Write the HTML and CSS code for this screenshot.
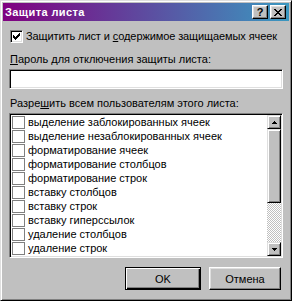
FILE: index.html
```html
<!DOCTYPE html>
<html lang="ru">
<head>
<meta charset="utf-8">
<title>Защита листа</title>
<link rel="stylesheet" href="styles.css">
</head>
<body>
<div class="dialog">
  <div class="titlebar">
    <span class="title">Защита листа</span>
    <div class="tbtns">
      <span class="tbtn help">?</span>
      <span class="tbtn close">
        <svg width="8" height="7" viewBox="0 0 8 7" shape-rendering="crispEdges"><path d="M0 0h2v1h-2zM6 0h2v1h-2zM1 1h2v1h-2zM5 1h2v1h-2zM2 2h4v1h-4zM3 3h2v1h-2zM2 4h4v1h-4zM1 5h2v1h-2zM5 5h2v1h-2zM0 6h2v1h-2zM6 6h2v1h-2z" fill="#000"/></svg>
      </span>
    </div>
  </div>
  <div class="content">
    <div class="chk-row">
      <span class="chk">
        <svg width="7" height="7" viewBox="0 0 7 7" shape-rendering="crispEdges"><path d="M6 0h1v1h-1zM5 1h2v1h-2zM0 2h1v1h-1zM4 2h3v1h-3zM0 3h2v1h-2zM3 3h3v1h-3zM0 4h5v1h-5zM1 5h3v1h-3zM2 6h1v1h-1z" fill="#000"/></svg>
      </span>
      <span class="chk-text">Защитить лист и <u>с</u>одержимое защищаемых ячеек</span>
    </div>
    <div class="label"><u>П</u>ароль для отключения защиты листа:</div>
    <div class="field"></div>
    <div class="label second">Разре<u>ш</u>ить всем пользователям этого листа:</div>
    <div class="list">
      <div class="items">
        <div class="item"><span class="box"></span>выделение заблокированных ячеек</div>
        <div class="item"><span class="box"></span>выделение незаблокированных ячеек</div>
        <div class="item"><span class="box"></span>форматирование ячеек</div>
        <div class="item"><span class="box"></span>форматирование столбцов</div>
        <div class="item"><span class="box"></span>форматирование строк</div>
        <div class="item"><span class="box"></span>вставку столбцов</div>
        <div class="item"><span class="box"></span>вставку строк</div>
        <div class="item"><span class="box"></span>вставку гиперссылок</div>
        <div class="item"><span class="box"></span>удаление столбцов</div>
        <div class="item"><span class="box"></span>удаление строк</div>
      </div>
      <div class="scrollbar">
        <div class="sbtn"><svg width="5" height="3" viewBox="0 0 5 3" shape-rendering="crispEdges"><path d="M2 0h1v1h-1zM1 1h3v1h-3zM0 2h5v1h-5z" fill="#000"/></svg></div>
        <div class="thumb"></div>
        <div class="track"></div>
        <div class="sbtn"><svg width="5" height="3" viewBox="0 0 5 3" shape-rendering="crispEdges"><path d="M0 0h5v1h-5zM1 1h3v1h-3zM2 2h1v1h-1z" fill="#000"/></svg></div>
      </div>
    </div>
    <div class="buttons">
      <div class="btn default">OK</div>
      <div class="btn cancel">Отмена</div>
    </div>
  </div>
</div>
</body>
</html>
```
FILE: styles.css
```css
html, body {
  margin: 0;
  padding: 0;
  background: #c0c0c0;
}
.dialog {
  width: 292px;
  height: 301px;
  box-sizing: border-box;
  border: 1px solid;
  border-color: #dfdfdf #000 #000 #dfdfdf;
  box-shadow: inset 1px 1px #fff, inset -1px -1px #808080;
  padding: 2px;
  background: #c0c0c0;
  font-family: "Liberation Sans", Arial, sans-serif;
  font-size: 11px;
  color: #000;
}
.titlebar {
  height: 18px;
  display: flex;
  align-items: center;
  justify-content: space-between;
  background: linear-gradient(to right, #800080, #3a98c0);
  color: #fff;
  font-weight: bold;
  padding: 0 3px 0 2px;
}
.title {
  line-height: 18px;
  letter-spacing: 0.4px;
}
.tbtns {
  display: flex;
  gap: 2px;
}
.tbtn {
  width: 16px;
  height: 14px;
  box-sizing: border-box;
  border: 1px solid;
  border-color: #fff #000 #000 #fff;
  box-shadow: inset -1px -1px #808080, inset 1px 1px #dfdfdf;
  background: #c0c0c0;
  color: #000;
  display: flex;
  align-items: center;
  justify-content: center;
  font-size: 11px;
  font-weight: bold;
  line-height: 12px;
}
.content {
  padding: 9px 8px 0 6px;
}
.chk-row {
  display: flex;
  align-items: center;
  height: 13px;
  line-height: 13px;
  white-space: nowrap;
}
.chk {
  flex: none;
  width: 13px;
  height: 13px;
  box-sizing: border-box;
  margin-left: 1px;
  border: 1px solid;
  border-color: #808080 #fff #fff #808080;
  box-shadow: inset 1px 1px #000, inset -1px -1px #dfdfdf;
  background: #fff;
  display: flex;
  align-items: center;
  justify-content: center;
}
.chk-text {
  margin-left: 3px;
  white-space: nowrap;
  letter-spacing: -0.1px;
}
.label {
  line-height: 13px;
  margin-top: 10px;
  padding-left: 1px;
  white-space: nowrap;
}
.label.second {
  margin-top: 8px;
}
u {
  text-decoration: underline;
}
.field {
  margin-top: 3px;
  width: 274px;
  height: 20px;
  box-sizing: border-box;
  border: 1px solid;
  border-color: #808080 #fff #fff #808080;
  box-shadow: inset 1px 1px #000, inset -1px -1px #dfdfdf;
  background: #fff;
}
.list {
  margin-top: 3px;
  width: 274px;
  height: 145px;
  box-sizing: border-box;
  border: 1px solid;
  border-color: #808080 #fff #fff #808080;
  box-shadow: inset 1px 1px #000, inset -1px -1px #dfdfdf;
  background: #fff;
  padding: 1px;
  display: flex;
}
.items {
  flex: 1;
  display: flex;
  flex-direction: column;
}
.item {
  height: 14px;
  display: flex;
  align-items: center;
  line-height: 13px;
  white-space: nowrap;
}
.box {
  flex: none;
  width: 13px;
  height: 13px;
  box-sizing: border-box;
  margin-left: 1px;
  margin-right: 3px;
  border: 1px solid #808080;
  background: #fff;
}
.scrollbar {
  width: 14px;
  display: flex;
  flex-direction: column;
}
.sbtn, .thumb {
  box-sizing: border-box;
  border: 1px solid;
  border-color: #dfdfdf #000 #000 #dfdfdf;
  box-shadow: inset 1px 1px #fff, inset -1px -1px #808080;
  background: #c0c0c0;
}
.sbtn {
  height: 14px;
  display: flex;
  align-items: center;
  justify-content: center;
}
.thumb {
  height: 74px;
}
.track {
  flex: 1;
  background-color: #c0c0c0;
  background-image: conic-gradient(#fff 25%, #c0c0c0 0 50%, #fff 0 75%, #c0c0c0 0);
  background-size: 2px 2px;
}
.buttons {
  margin-top: 9px;
  display: flex;
  justify-content: flex-end;
  gap: 8px;
}
.btn {
  height: 23px;
  box-sizing: border-box;
  display: flex;
  align-items: center;
  justify-content: center;
  background: #c0c0c0;
}
.btn.default {
  width: 76px;
  border: 1px solid #000;
  box-shadow: inset 1px 1px #fff, inset -1px -1px #000, inset -2px -2px #808080;
}
.btn.cancel {
  width: 72px;
  border: 1px solid;
  border-color: #fff #000 #000 #fff;
  box-shadow: inset -1px -1px #808080, inset 1px 1px #dfdfdf;
}
```
